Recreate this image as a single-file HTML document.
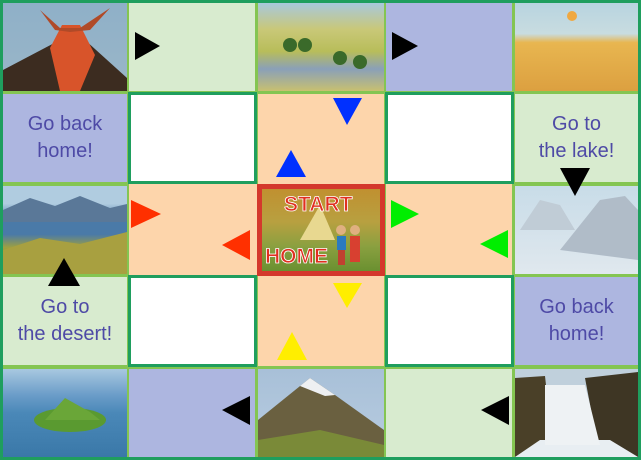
<!DOCTYPE html>
<html><head><style>
body{margin:0;width:641px;height:460px;overflow:hidden;background:#84c552;position:relative;font-family:"Comic Sans MS","Liberation Sans",sans-serif}
.c{position:absolute;overflow:hidden}
.t{display:flex;align-items:center;justify-content:center;text-align:center;color:#4e4aa6;font-size:20px;line-height:27px}
.w{background:#fff;border:3px solid #1f9e5e;box-sizing:border-box}
svg{position:absolute;left:0;top:0}
</style></head><body>
<!-- row1 -->
<div class="c" style="left:3px;top:3px;width:124px;height:88px;background:linear-gradient(180deg,#8fb0c8 0%,#9ab6c8 100%)"></div>
<div class="c" style="left:129px;top:3px;width:126px;height:88px;background:#d8ebcf"></div>
<div class="c" style="left:258px;top:3px;width:126px;height:88px;background:linear-gradient(180deg,#a8c8dc 0%,#c9c878 30%,#b8bd5a 55%,#8aa0b8 75%,#c8c070 100%)"></div>
<div class="c" style="left:386px;top:3px;width:126px;height:88px;background:#adb6e0"></div>
<div class="c" style="left:515px;top:3px;width:123px;height:88px;background:linear-gradient(180deg,#b8d4e0 0%,#c8dce0 35%,#e8b650 45%,#dca040 100%)"></div>
<!-- row2 -->
<div class="c t" style="left:3px;top:94px;width:124px;height:88px;background:#adb6e0">Go back<br>home!</div>
<div class="c w" style="left:128px;top:92px;width:129px;height:92px"></div>
<div class="c" style="left:258px;top:94px;width:126px;height:90px;background:#fdd5ab"></div>
<div class="c w" style="left:385px;top:92px;width:129px;height:92px"></div>
<div class="c t" style="left:515px;top:94px;width:123px;height:88px;background:#d8ebcf">Go to<br>the lake!</div>
<!-- row3 -->
<div class="c" style="left:3px;top:186px;width:124px;height:88px;background:linear-gradient(180deg,#b0cce0 0%,#b0cce0 20%,#4a7aa8 40%,#4a7aa8 55%,#9ea040 70%,#7a8a30 100%)"></div>
<div class="c" style="left:129px;top:184px;width:128px;height:91px;background:#fdd5ab"></div>
<div class="c" style="left:257px;top:184px;width:128px;height:92px;background:#d4382c"></div>
<div class="c" style="left:262px;top:189px;width:118px;height:82px;background:linear-gradient(180deg,#c09030 0%,#b8a040 40%,#8aa040 70%,#6a9030 100%)"></div>
<div class="c" style="left:386px;top:184px;width:126px;height:91px;background:#fdd5ab"></div>
<div class="c" style="left:515px;top:186px;width:123px;height:88px;background:linear-gradient(180deg,#c8dce8 0%,#e0e8ee 100%)"></div>
<!-- row4 -->
<div class="c t" style="left:3px;top:277px;width:124px;height:88px;background:#d8ebcf">Go to<br>the desert!</div>
<div class="c w" style="left:128px;top:275px;width:129px;height:92px"></div>
<div class="c" style="left:258px;top:276px;width:126px;height:90px;background:#fdd5ab"></div>
<div class="c w" style="left:385px;top:275px;width:129px;height:92px"></div>
<div class="c t" style="left:515px;top:277px;width:123px;height:88px;background:#adb6e0">Go back<br>home!</div>
<!-- row5 -->
<div class="c" style="left:3px;top:369px;width:124px;height:88px;background:linear-gradient(180deg,#a8c8e0 0%,#6a9cc8 30%,#4a88b8 50%,#3a78a8 100%)"></div>
<div class="c" style="left:129px;top:369px;width:126px;height:88px;background:#adb6e0"></div>
<div class="c" style="left:258px;top:369px;width:126px;height:88px;background:linear-gradient(180deg,#a8c0d8 0%,#b8cce0 100%)"></div>
<div class="c" style="left:386px;top:369px;width:126px;height:88px;background:#d8ebcf"></div>
<div class="c" style="left:515px;top:369px;width:123px;height:88px;background:#c0d0dc"></div>
<svg width="641" height="460">
<!-- volcano -->
<polygon points="3,91 3,70 60,40 85,40 127,78 127,91" fill="#3c2c20"/>
<polygon points="50,48 62,25 80,25 95,55 80,91 60,91" fill="#d8542a"/>
<polygon points="40,10 60,28 80,28 110,8 90,30 70,32 55,30" fill="#b04a28"/>
<!-- trees scene -->
<circle cx="290" cy="45" r="7" fill="#3a6a2a"/><circle cx="305" cy="45" r="7" fill="#3a6a2a"/><circle cx="340" cy="58" r="7" fill="#3a6a2a"/><circle cx="360" cy="62" r="7" fill="#3a6a2a"/>
<circle cx="572" cy="16" r="5" fill="#f0a840"/>
<!-- lake mountains -->
<polygon points="3,210 30,198 55,206 80,196 110,208 127,204 127,222 3,222" fill="#5a7898"/>
<polygon points="3,250 40,238 80,244 127,232 127,274 3,274" fill="#a8a040"/>
<!-- glacier -->
<polygon points="560,250 600,200 625,196 638,210 638,260" fill="#b0bcc8"/>
<polygon points="520,230 540,200 560,205 575,230" fill="#c0ccd6"/>
<!-- start -->
<polygon points="300,240 320,205 335,240" fill="#e8d890"/>
<circle cx="341" cy="230" r="5" fill="#e0b080"/><rect x="337" y="236" width="9" height="14" fill="#2a7ac0"/><rect x="338" y="250" width="7" height="15" fill="#c04030"/>
<circle cx="355" cy="230" r="5" fill="#e0b080"/><rect x="350" y="236" width="10" height="26" fill="#d84030"/>
<text x="284" y="211" font-family="Comic Sans MS,Liberation Sans,sans-serif" font-weight="bold" font-size="21" fill="#e03020" stroke="#fff" stroke-width="0.8">START</text>
<text x="265" y="263" font-family="Comic Sans MS,Liberation Sans,sans-serif" font-weight="bold" font-size="21" fill="#e03020" stroke="#fff" stroke-width="0.8">HOME</text>
<!-- island -->
<ellipse cx="70" cy="420" rx="36" ry="12" fill="#5a9a30"/><polygon points="45,420 65,398 90,412 100,420" fill="#6aa638"/>
<!-- mountain -->
<polygon points="258,457 258,420 310,378 335,395 384,430 384,457" fill="#6a6040"/>
<polygon points="300,386 310,378 335,395 325,396" fill="#eef0f2"/>
<polygon points="258,440 320,430 384,445 384,457 258,457" fill="#7a8a38"/>
<!-- waterfall -->
<polygon points="515,378 545,376 552,440 515,457" fill="#4a4028"/>
<polygon points="585,378 638,372 638,457 600,457" fill="#3e3624"/>
<polygon points="540,440 610,440 638,457 515,457" fill="#e8eef2"/>
<polygon points="545,385 585,385 600,445 545,445" fill="#eef2f4"/>
<rect x="1.5" y="1.5" width="638" height="457" fill="none" stroke="#1f9e5e" stroke-width="3"/>
<polygon points="135,32 160,46 135,60" fill="#000"/>
<polygon points="392,32 418,46 392,60" fill="#000"/>
<polygon points="333,98 362,98 347,125" fill="#0030ff"/>
<polygon points="276,177 306,177 291,150" fill="#0030ff"/>
<polygon points="131,200 161,214 131,228" fill="#ff3000"/>
<polygon points="250,230 222,245 250,260" fill="#ff3000"/>
<polygon points="391,200 419,214 391,228" fill="#00ee00"/>
<polygon points="508,230 480,244 508,258" fill="#00ee00"/>
<polygon points="333,283 362,283 347,308" fill="#ffee00"/>
<polygon points="277,360 307,360 292,332" fill="#ffee00"/>
<polygon points="560,168 590,168 575,196" fill="#000"/>
<polygon points="48,286 80,286 64,258" fill="#000"/>
<polygon points="250,396 222,410 250,425" fill="#000"/>
<polygon points="509,396 481,410 509,425" fill="#000"/>
</svg>
</body></html>
